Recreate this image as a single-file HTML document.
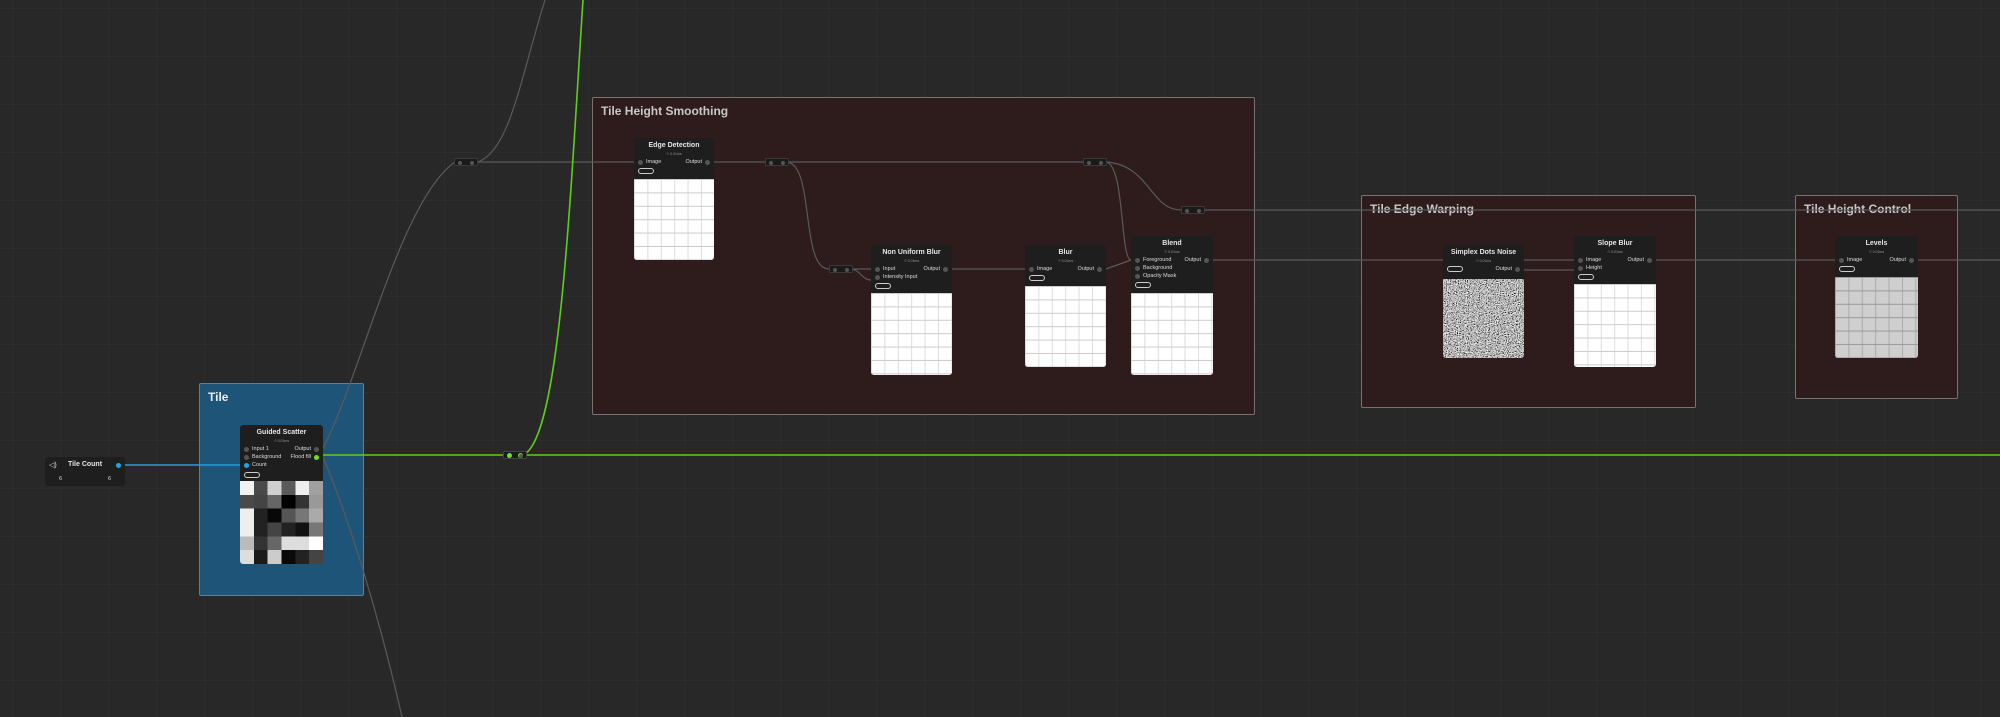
<!DOCTYPE html>
<html><head><meta charset="utf-8"><style>
*{margin:0;padding:0;box-sizing:border-box}
body{width:2000px;height:717px;overflow:hidden;background:#282828;font-family:"Liberation Sans",sans-serif;position:relative;
background-image:linear-gradient(#2d2d2d 1px,transparent 1px),linear-gradient(90deg,#2d2d2d 1px,transparent 1px);background-size:48px 48px;background-position:12px 8px}
.grp{position:absolute;background:#2e1c1c;border:1px solid #7a7272;border-radius:2px}
.grp .t{position:absolute;left:8px;top:6px;color:#c8c8c8;font-size:12px;font-weight:bold}
.node{position:absolute;background:#1e1e1e;border-radius:3px;overflow:hidden;color:#e6e6e6}
.node .h{position:absolute;left:0;right:0;top:4px;text-align:center;font-size:7px;font-weight:bold}
.node .ms{position:absolute;left:0;right:0;top:14px;text-align:center;font-size:3.5px;color:#999}
.p{position:absolute;font-size:5.5px;color:#ddd;white-space:nowrap}
.d{position:absolute;width:5px;height:5px;border-radius:50%;background:#555}
.b{position:absolute;width:16px;height:6px;border:1px solid #ccc;border-radius:3px}
.pv{position:absolute;left:0;right:0;bottom:0;background:#fff;
background-image:linear-gradient(#ccc 1px,transparent 1px),linear-gradient(90deg,#ddd 1px,transparent 1px);background-size:13.4px 13.4px}
.rr{position:absolute;width:24px;height:8px;background:#1a1a1a;border:1px solid #3a3a3a;border-radius:2px}
.rr:before,.rr:after{content:"";position:absolute;top:1.5px;width:4px;height:4px;border-radius:50%;background:#555}
.rr:before{left:3px}.rr:after{right:3px}
</style></head><body>
<svg width="2000" height="717" style="position:absolute;left:0;top:0">
<defs><filter id="n" x="0" y="0" width="100%" height="100%"><feTurbulence type="fractalNoise" baseFrequency="0.9" numOctaves="2" seed="3"/><feColorMatrix type="matrix" values="0.33 0.33 0.33 0 0  0.33 0.33 0.33 0 0  0.33 0.33 0.33 0 0  0 0 0 0 1"/><feComponentTransfer><feFuncR type="linear" slope="4" intercept="-1.5"/><feFuncG type="linear" slope="4" intercept="-1.5"/><feFuncB type="linear" slope="4" intercept="-1.5"/></feComponentTransfer></filter></defs>
</svg>
<div class="grp" style="left:199px;top:383px;width:165px;height:213px;background:#1f5479;border-color:#5d7f9c"><div class="t" style="color:#e8eef4">Tile</div></div>
<div class="grp" style="left:592px;top:97px;width:663px;height:318px"><div class="t">Tile Height Smoothing</div></div>
<div class="grp" style="left:1361px;top:195px;width:335px;height:213px"><div class="t">Tile Edge Warping</div></div>
<div class="grp" style="left:1795px;top:195px;width:163px;height:204px"><div class="t">Tile Height Control</div></div>

<svg width="2000" height="717" style="position:absolute;left:0;top:0" fill="none">
<g stroke="#5a5a5a" stroke-width="1.2">
<path d="M322 450 C 360 380, 400 200, 455 162"/>
<path d="M478 162 C 510 150, 520 80, 545 0"/>
<path d="M322 455 C 350 520, 380 620, 402 717"/>
<path d="M478 162 L634 162"/>
<path d="M714 162 L765 162"/>
<path d="M787 162 L1083 162"/>
<path d="M787 162 C 815 165, 800 269, 829 269"/>
<path d="M852 269 L871 269"/><path d="M852 269 C 860 270, 862 280, 871 280"/>
<path d="M952 269 L1025 269"/>
<path d="M1106 269 L1131 260"/>
<path d="M1106 162 C 1125 165, 1120 260, 1131 260"/>
<path d="M1106 162 C 1150 165, 1150 210, 1181 210"/>
<path d="M1204 210 L2000 210"/>
<path d="M1213 260 L1574 260"/>
<path d="M1524 270 L1574 270"/>
<path d="M1656 260 L1835 260"/>
<path d="M1918 260 L2000 260"/>
</g>
<path d="M120 465 L246 465" stroke="#22a0d8" stroke-width="1.6"/>
<path d="M322 455 L2000 455" stroke="#5fce1a" stroke-width="1.6"/>
<path d="M523 455 C 560 440, 570 200, 583 0" stroke="#5fce1a" stroke-width="1.6"/>
</svg>

<div class="rr" style="left:454px;top:158px"></div>
<div class="rr" style="left:765px;top:158px"></div>
<div class="rr" style="left:1083px;top:158px"></div>
<div class="rr" style="left:1181px;top:206px"></div>
<div class="rr" style="left:829px;top:265px"></div>
<div class="rr" style="left:503px;top:451px;border-color:#444"><span class="d" style="left:3px;top:1px;width:5px;height:5px;background:#6be21f"></span><span class="d" style="right:3px;top:1px;width:5px;height:5px;background:#6be21f"></span></div>

<div class="node" style="left:45px;top:457px;width:80px;height:29px">
<div class="p" style="left:4px;top:4px;font-size:7px">◁)</div>
<div class="h" style="top:4px">Tile Count</div>
<div class="d" style="left:71px;top:6px;background:#1ea6e6"></div>
<div class="p" style="left:14px;top:19px">6</div><div class="p" style="left:63px;top:19px">6</div>
</div>

<div class="node" style="left:240px;top:425px;width:83px;height:139px">
<div class="h">Guided Scatter</div><div class="ms">⏱ 0.01ms</div>
<div class="d" style="left:4px;top:22px"></div><div class="p" style="left:12px;top:21px">Input 1</div>
<div class="p" style="right:12px;top:21px">Output</div><div class="d" style="right:4px;top:22px"></div>
<div class="d" style="left:4px;top:30px"></div><div class="p" style="left:12px;top:29px">Background</div>
<div class="p" style="right:12px;top:29px">Flood fill</div><div class="d" style="right:4px;top:30px;background:#6be21f"></div>
<div class="d" style="left:4px;top:38px;background:#1ea6e6"></div><div class="p" style="left:12px;top:37px">Count</div>
<div class="b" style="left:4px;top:47px"></div>
<svg style="position:absolute;left:0;top:56px" width="83" height="83" viewBox="0 0 6 6" preserveAspectRatio="none" shape-rendering="crispEdges">
<g>
<rect x="0" y="0" width="1" height="1" fill="#f2f2f2"/><rect x="1" y="0" width="1" height="1" fill="#4a4a4a"/><rect x="2" y="0" width="1" height="1" fill="#d0d0d0"/><rect x="3" y="0" width="1" height="1" fill="#5a5a5a"/><rect x="4" y="0" width="1" height="1" fill="#eee"/><rect x="5" y="0" width="1" height="1" fill="#a0a0a0"/>
<rect x="0" y="1" width="1" height="1" fill="#4a4a4a"/><rect x="1" y="1" width="1" height="1" fill="#444"/><rect x="2" y="1" width="1" height="1" fill="#666"/><rect x="3" y="1" width="1" height="1" fill="#000"/><rect x="4" y="1" width="1" height="1" fill="#333"/><rect x="5" y="1" width="1" height="1" fill="#999"/>
<rect x="0" y="2" width="1" height="1" fill="#eee"/><rect x="1" y="2" width="1" height="1" fill="#222"/><rect x="2" y="2" width="1" height="1" fill="#080808"/><rect x="3" y="2" width="1" height="1" fill="#555"/><rect x="4" y="2" width="1" height="1" fill="#777"/><rect x="5" y="2" width="1" height="1" fill="#aaa"/>
<rect x="0" y="3" width="1" height="1" fill="#eee"/><rect x="1" y="3" width="1" height="1" fill="#222"/><rect x="2" y="3" width="1" height="1" fill="#444"/><rect x="3" y="3" width="1" height="1" fill="#222"/><rect x="4" y="3" width="1" height="1" fill="#111"/><rect x="5" y="3" width="1" height="1" fill="#777"/>
<rect x="0" y="4" width="1" height="1" fill="#bbb"/><rect x="1" y="4" width="1" height="1" fill="#333"/><rect x="2" y="4" width="1" height="1" fill="#666"/><rect x="3" y="4" width="1" height="1" fill="#ddd"/><rect x="4" y="4" width="1" height="1" fill="#ddd"/><rect x="5" y="4" width="1" height="1" fill="#fff"/>
<rect x="0" y="5" width="1" height="1" fill="#ddd"/><rect x="1" y="5" width="1" height="1" fill="#1a1a1a"/><rect x="2" y="5" width="1" height="1" fill="#ccc"/><rect x="3" y="5" width="1" height="1" fill="#0a0a0a"/><rect x="4" y="5" width="1" height="1" fill="#222"/><rect x="5" y="5" width="1" height="1" fill="#444"/>
</g></svg>
</div>

<div class="node" style="left:634px;top:138px;width:80px;height:122px">
<div class="h">Edge Detection</div><div class="ms">⏱ 0.01ms</div>
<div class="d" style="left:4px;top:22px"></div><div class="p" style="left:12px;top:21px">Image</div>
<div class="p" style="right:12px;top:21px">Output</div><div class="d" style="right:4px;top:22px"></div>
<div class="b" style="left:4px;top:30px"></div>
<div class="pv" style="top:41px"></div>
</div>

<div class="node" style="left:871px;top:245px;width:81px;height:130px">
<div class="h">Non Uniform Blur</div><div class="ms">⏱ 0.01ms</div>
<div class="d" style="left:4px;top:22px"></div><div class="p" style="left:12px;top:21px">Input</div>
<div class="p" style="right:12px;top:21px">Output</div><div class="d" style="right:4px;top:22px"></div>
<div class="d" style="left:4px;top:30px"></div><div class="p" style="left:12px;top:29px">Intensity Input</div>
<div class="b" style="left:4px;top:38px"></div>
<div class="pv" style="top:48px"></div>
</div>

<div class="node" style="left:1025px;top:245px;width:81px;height:122px">
<div class="h">Blur</div><div class="ms">⏱ 0.01ms</div>
<div class="d" style="left:4px;top:22px"></div><div class="p" style="left:12px;top:21px">Image</div>
<div class="p" style="right:12px;top:21px">Output</div><div class="d" style="right:4px;top:22px"></div>
<div class="b" style="left:4px;top:30px"></div>
<div class="pv" style="top:41px"></div>
</div>

<div class="node" style="left:1131px;top:236px;width:82px;height:139px">
<div class="h">Blend</div><div class="ms">⏱ 0.01ms</div>
<div class="d" style="left:4px;top:22px"></div><div class="p" style="left:12px;top:21px">Foreground</div>
<div class="p" style="right:12px;top:21px">Output</div><div class="d" style="right:4px;top:22px"></div>
<div class="d" style="left:4px;top:30px"></div><div class="p" style="left:12px;top:29px">Background</div>
<div class="d" style="left:4px;top:38px"></div><div class="p" style="left:12px;top:37px">Opacity Mask</div>
<div class="b" style="left:4px;top:46px"></div>
<div class="pv" style="top:57px"></div>
</div>

<div class="node" style="left:1443px;top:245px;width:81px;height:113px">
<div class="h">Simplex Dots Noise</div><div class="ms">⏱ 0.01ms</div>
<div class="b" style="left:4px;top:21px"></div>
<div class="p" style="right:12px;top:21px">Output</div><div class="d" style="right:4px;top:22px"></div>
<svg style="position:absolute;left:0;top:34px" width="81" height="79"><rect width="81" height="79" filter="url(#n)"/></svg>
</div>

<div class="node" style="left:1574px;top:236px;width:82px;height:131px">
<div class="h">Slope Blur</div><div class="ms">⏱ 0.01ms</div>
<div class="d" style="left:4px;top:22px"></div><div class="p" style="left:12px;top:21px">Image</div>
<div class="p" style="right:12px;top:21px">Output</div><div class="d" style="right:4px;top:22px"></div>
<div class="d" style="left:4px;top:30px"></div><div class="p" style="left:12px;top:29px">Height</div>
<div class="b" style="left:4px;top:38px"></div>
<div class="pv" style="top:48px"></div>
</div>

<div class="node" style="left:1835px;top:236px;width:83px;height:122px">
<div class="h">Levels</div><div class="ms">⏱ 0.01ms</div>
<div class="d" style="left:4px;top:22px"></div><div class="p" style="left:12px;top:21px">Image</div>
<div class="p" style="right:12px;top:21px">Output</div><div class="d" style="right:4px;top:22px"></div>
<div class="b" style="left:4px;top:30px"></div>
<div class="pv" style="top:41px;background-color:#cfcfcf;background-image:linear-gradient(#999 1px,transparent 1px),linear-gradient(90deg,#aaa 1px,transparent 1px)"></div>
</div>
</body></html>
